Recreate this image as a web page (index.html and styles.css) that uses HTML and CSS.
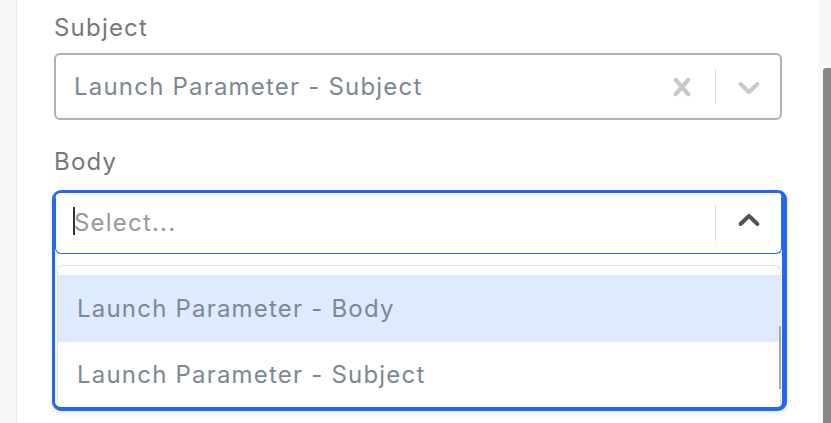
FILE: index.html
```html
<!DOCTYPE html>
<html lang="en">
<head>
<meta charset="utf-8">
<title>Select fields</title>
<link rel="stylesheet" href="styles.css">
</head>
<body>
<div class="page">
  <div class="sidebar"></div>
  <main class="panel">
    <div class="field">
      <div class="label">Subject</div>
      <div class="control">
        <div class="value">Launch Parameter - Subject</div>
        <div class="indicators">
          <svg class="icon clear" viewBox="0 0 20 20" aria-hidden="true"><path d="M14.348 14.849c-0.469 0.469-1.229 0.469-1.697 0l-2.651-3.030-2.651 3.029c-0.469 0.469-1.229 0.469-1.697 0-0.469-0.469-0.469-1.229 0-1.697l2.758-3.150-2.759-3.152c-0.469-0.469-0.469-1.228 0-1.697s1.228-0.469 1.697 0l2.652 3.031 2.651-3.031c0.469-0.469 1.228-0.469 1.697 0s0.469 1.229 0 1.697l-2.758 3.152 2.758 3.150c0.469 0.469 0.469 1.229 0 1.698z"/></svg>
          <span class="sep"></span>
          <svg class="icon chevron" viewBox="0 0 20 20" aria-hidden="true"><path d="M4.516 7.548c0.436-0.446 1.043-0.481 1.576 0l3.908 3.747 3.908-3.747c0.533-0.481 1.141-0.446 1.574 0 0.436 0.445 0.408 1.197 0 1.615-0.406 0.418-4.695 4.502-4.695 4.502-0.217 0.223-0.502 0.335-0.787 0.335s-0.570-0.112-0.789-0.335c0 0-4.287-4.084-4.695-4.502s-0.436-1.170 0-1.615z"/></svg>
        </div>
      </div>
    </div>
    <div class="field field-body">
      <div class="label">Body</div>
      <div class="select-open">
        <div class="control control-focused">
          <div class="value placeholder"><span class="caret"></span>Select...</div>
          <div class="indicators">
            <span class="sep sep-tall"></span>
            <svg class="icon chevron up" viewBox="0 0 20 20" aria-hidden="true"><path d="M4.516 7.548c0.436-0.446 1.043-0.481 1.576 0l3.908 3.747 3.908-3.747c0.533-0.481 1.141-0.446 1.574 0 0.436 0.445 0.408 1.197 0 1.615-0.406 0.418-4.695 4.502-4.695 4.502-0.217 0.223-0.502 0.335-0.787 0.335s-0.570-0.112-0.789-0.335c0 0-4.287-4.084-4.695-4.502s-0.436-1.170 0-1.615z"/></svg>
          </div>
        </div>
        <div class="menu">
          <div class="option focused">Launch Parameter - Body</div>
          <div class="option last">Launch Parameter - Subject</div>
          <span class="menu-thumb"></span>
        </div>
      </div>
    </div>
  </main>
  <div class="gutter"></div>
  <div class="scrollbar"><div class="thumb"></div></div>
</div>
</body>
</html>
```

FILE: styles.css
```css
html, body {
  margin: 0;
  padding: 0;
  background: #ffffff;
}

.page {
  display: flex;
  width: 831px;
  height: 423px;
  overflow: hidden;
  font-family: Inter, "Liberation Sans", sans-serif;
  font-size: 24px;
  line-height: 28px;
  letter-spacing: 1.2px;
}

.sidebar {
  flex: none;
  width: 16px;
  background: #f7f8f9;
  border-right: 1px solid #e8eaec;
}

.panel {
  flex: none;
  width: 801px;
  box-sizing: border-box;
  padding: 14px 36px 0 37px;
  background: #ffffff;
}

.gutter {
  flex: none;
  width: 5px;
  background: #f8f8f8;
}

.scrollbar {
  flex: none;
  width: 8px;
  background: #f8f8f8;
  display: flex;
  flex-direction: column;
}

.thumb {
  margin-top: 68px;
  flex: 1;
  background: #878787;
  border-radius: 3px 0 0 0;
}

.label {
  color: #787878;
  margin-bottom: 11px;
}

.field-body {
  margin-top: 28px;
}

.field-body .label {
  margin-bottom: 14px;
}

.control {
  display: flex;
  align-items: center;
  box-sizing: border-box;
  height: 67px;
  border: 2px solid #aab2bb;
  border-radius: 6px;
  padding: 0 13.5px 0 18px;
  background: #ffffff;
}

.value {
  flex: 1;
  color: #7d8894;
  white-space: nowrap;
  position: relative;
}

.placeholder {
  color: #999999;
}

.caret {
  position: absolute;
  left: -1px;
  top: -2px;
  width: 2px;
  height: 28px;
  background: #333333;
}

.indicators {
  display: flex;
  align-items: center;
}

.icon {
  width: 36px;
  height: 36px;
  display: block;
}

.clear {
  fill: #c9c9c9;
  margin-right: 15px;
}

.chevron {
  fill: #c9c9c9;
}

.chevron.up {
  fill: #555555;
  transform: rotate(180deg);
  margin-top: -5px;
}

.sep {
  display: block;
  width: 1.5px;
  height: 35px;
  background: #dcdcdc;
  margin-right: 14.5px;
}

.sep-tall {
  height: 36px;
}

.select-open {
  margin: 0 -5px 0 -2px;
  border: 3px solid #2468f2;
  border-right-width: 5px;
  border-bottom-width: 4px;
  border-radius: 9px;
  overflow: hidden;
  background: #ffffff;
  box-shadow: 0 3px 6px rgba(0, 0, 0, 0.08);
}

.control-focused {
  height: 61px;
  border: 1px solid #2468f2;
  border-top: none;
  border-radius: 0 0 6px 6px;
  padding: 0 14.5px 0 18px;
}

.menu {
  position: relative;
  margin: 11px 1px 0 2px;
  border: 1px solid #e3e3e3;
  border-bottom: none;
  border-radius: 6px 6px 0 0;
  padding-top: 9px;
  box-shadow: 0 -1px 3px rgba(0, 0, 0, 0.04);
}

.option {
  display: flex;
  align-items: center;
  height: 67px;
  padding-left: 19px;
  color: #7d8894;
  white-space: nowrap;
}

.option.focused {
  background: #deebff;
}

.option.last {
  height: 65px;
}

.menu-thumb {
  position: absolute;
  right: -1px;
  top: 60px;
  width: 2px;
  height: 63px;
  background: #a6a6a6;
}
```
